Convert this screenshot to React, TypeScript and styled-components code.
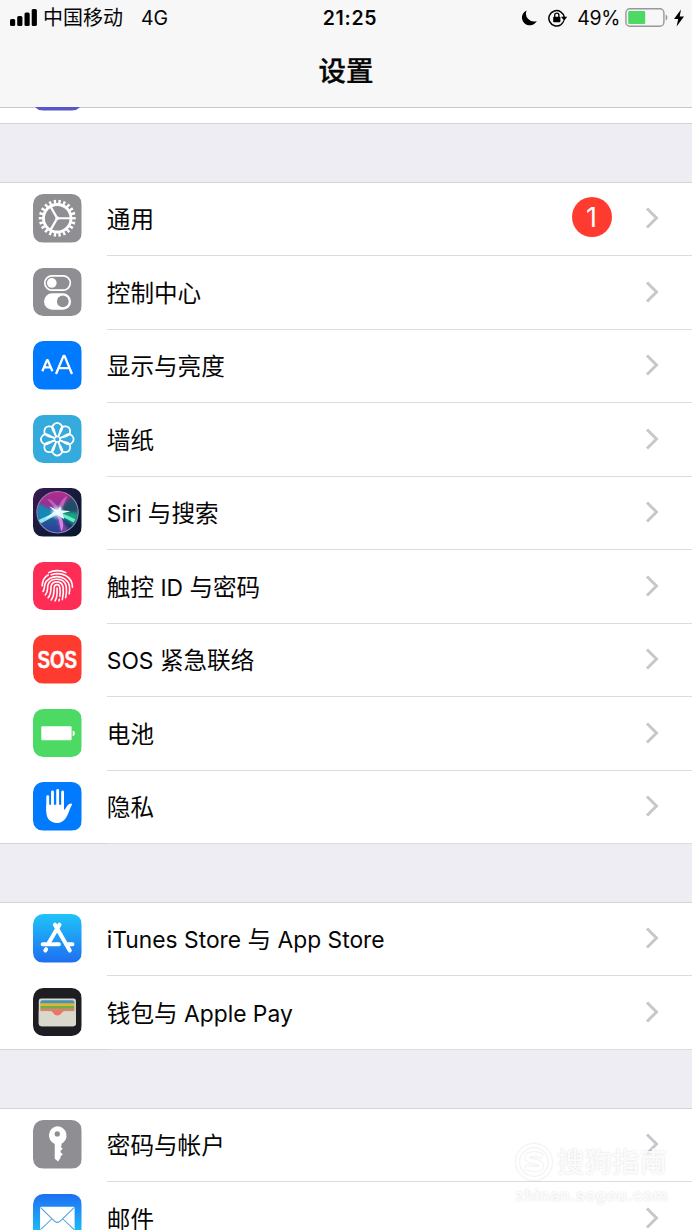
import React from 'react';
import styled, { createGlobalStyle } from 'styled-components';

const GlobalStyle = createGlobalStyle`
  *, *::before, *::after {
    box-sizing: border-box;
  }

  body {
    margin: 0;
    background: #eeedf3;
    color: #060606;
    font-family: Inter, 'Noto Sans CJK SC', sans-serif;
  }
`;

const Screen = styled.div`
  position: relative;
  width: 692px;
  height: 1230px;
  overflow: hidden;
  background: #eeedf3;
`;

const Header = styled.header`
  height: 107px;
  background: #f7f7f7;
`;

const StatusBar = styled.div`
  display: grid;
  grid-template-columns: 1fr auto 1fr;
  align-items: center;
  height: 35px;
  padding: 0 8px 0 10px;
`;

const StatusSide = styled.div<{ $end?: boolean }>`
  display: flex;
  align-items: center;
  justify-content: ${p => (p.$end ? 'flex-end' : 'flex-start')};
`;

const Carrier = styled.span`
  margin-left: 6px;
  padding-top: 1px;
  font-size: 20px;
  line-height: 34px;
`;

const Network = styled.span`
  margin-left: 18px;
  font-size: 19.5px;
  letter-spacing: -0.2px;
`;

const Time = styled.span`
  padding-left: 6px;
  font-size: 19.5px;
  font-weight: 600;
  letter-spacing: 0.7px;
`;

const Percent = styled.span`
  margin: 0 5px 0 9px;
  font-size: 19.5px;
  letter-spacing: -0.4px;
`;

const Title = styled.h1`
  margin: 0;
  font-size: 27.5px;
  font-weight: 500;
  line-height: 72px;
  text-align: center;
  -webkit-text-stroke: 0.3px currentColor;
`;

const Group = styled.section<{ $gap: number }>`
  margin-top: ${p => p.$gap}px;
  background: #fff;
  box-shadow: 0 -1px 0 #d3d3d8;
`;

const Remainder = styled.div`
  display: flex;
  align-items: flex-end;
  height: 17px;
  padding: 0 0 12.5px 33.3px;
  overflow: hidden;
  background: #fff;
  border-bottom: 1px solid #d3d3d8;
  box-shadow: inset 0 1px 0 #c9c9cc;
`;

const Row = styled.div`
  display: flex;
  height: 73.5px;
  padding-left: 33.3px;

  &:last-child {
    box-shadow: inset 0 -1px 0 #d3d3d8;
  }
`;

const IconBox = styled.svg`
  flex: none;
  width: 48.5px;
  height: 48.5px;
  margin: 11.5px 25px 0 0;
  border-radius: 10.5px;
`;

const RowBody = styled.div`
  display: flex;
  flex: 1;
  align-items: center;
  padding: 0 33.5px 1px 0;
  border-bottom: 1px solid #dcdce0;
`;

const Label = styled.span`
  flex: 1;
  padding-top: 4px;
  font-size: 23.6px;
  line-height: 36px;
  white-space: nowrap;
`;

const Latin = styled.span`
  font-size: 22.8px;
`;

const Badge = styled.span`
  width: 40px;
  height: 40px;
  margin: -2px 33px 0 0;
  border-radius: 50%;
  background: #ff3b30;
  color: #fff;
  font-size: 27px;
  line-height: 41px;
  text-align: center;
`;

const Watermark = styled.div`
  position: absolute;
  left: 515px;
  top: 1143px;
  width: 160px;
  color: rgba(255, 255, 255, 0.88);
  text-shadow: 0 0 2px rgba(0, 0, 0, 0.15);
`;

const WatermarkBrand = styled.div`
  display: flex;
  align-items: center;
  gap: 4px;
  font-size: 27.5px;
  font-weight: 500;
  line-height: 38px;

  svg {
    filter: drop-shadow(0 0 1px rgba(0, 0, 0, 0.14));
  }
`;

const WatermarkSite = styled.div`
  font-size: 16px;
  font-weight: 600;
  line-height: 28px;
  letter-spacing: 0.6px;
  white-space: nowrap;
`;

const Chevron = () => (
  <svg width="14" height="22" viewBox="0 0 14 22" fill="none">
    <path d="M2 1.5 11.5 11 2 20.5" stroke="#c7c7cc" strokeWidth="3" />
  </svg>
);

const SignalIcon = () => (
  <svg width="27" height="17" viewBox="0 0 27 17">
    <rect x="0" y="10" width="5.2" height="7" rx="1.5" />
    <rect x="7.2" y="7" width="5.2" height="10" rx="1.5" />
    <rect x="14.5" y="3.5" width="5.2" height="13.5" rx="1.5" />
    <rect x="21.7" y="0" width="5.2" height="17" rx="1.5" />
  </svg>
);

const MoonIcon = () => (
  <svg width="15" height="16" viewBox="0 0 15 16">
    <path d="M4.6.4a8 8 0 0 0 10.2 10.5A7.8 7.8 0 1 1 4.6.4Z" />
  </svg>
);

const RotationLockIcon = () => (
  <svg width="20" height="18" viewBox="0 0 20 18" style={{ marginLeft: 11 }}>
    <path d="M13 15.6A7.7 7.7 0 1 1 16.2 8.2" fill="none" stroke="#000" strokeWidth="1.5" />
    <path d="M13 7.8h6.2l-3 4z" />
    <path d="M15.9 11.4a7.7 7.7 0 0 1-2.9 4.2" fill="none" stroke="#000" strokeWidth="1.3" />
    <rect x="5.2" y="7.8" width="7.2" height="5.4" rx=".7" />
    <path d="M6.7 8.2V6.3a2.1 2.1 0 0 1 4.2 0v1.9" fill="none" stroke="#000" strokeWidth="1.3" />
  </svg>
);

const StatusBattery = () => (
  <svg width="43" height="19" viewBox="0 0 43 19">
    <rect x=".9" y=".7" width="38" height="17.6" rx="4" fill="none" stroke="#98989b" strokeWidth="1.4" />
    <rect x="3.2" y="3" width="17" height="13" rx="1" fill="#4cd964" />
    <path d="M40.7 6.4c2.2.7 2.2 5.5 0 6.2z" fill="#98989b" />
  </svg>
);

const BoltIcon = () => (
  <svg width="10" height="18" viewBox="0 0 10 18" style={{ marginLeft: 6 }}>
    <path d="M7 .5 0 10h4.2L2.6 17.5 10 7.4H5.7z" />
  </svg>
);

const GearIcon = () => (
  <IconBox viewBox="0 0 48 48">
    <rect width="48" height="48" fill="#8e8e93" />
    <g fill="none" stroke="#fff" transform="translate(24 24)">
      <circle r="13.6" strokeWidth="2.8" />
      <circle r="16.2" strokeWidth="4.2" pathLength="44" strokeDasharray="1 1" strokeDashoffset="0.5" />
      <path d="M1.6 0H13M-.8 -1.4-6.5 -11.3M-.8 1.4-6.5 11.3" strokeWidth="2.2" />
      <circle r="1.9" fill="#fff" stroke="none" />
    </g>
  </IconBox>
);

const ControlIcon = () => (
  <IconBox viewBox="0 0 48 48">
    <rect width="48" height="48" fill="#8e8e93" />
    <rect x="11.7" y="7.7" width="25.2" height="14.2" rx="7.1" fill="none" stroke="#fff" strokeWidth="1.7" />
    <circle cx="18.6" cy="14.8" r="4.8" fill="#fff" />
    <rect x="10.9" y="25" width="26.8" height="16.2" rx="8.1" fill="#fff" />
    <circle cx="29.5" cy="33.1" r="5.8" fill="#8e8e93" />
  </IconBox>
);

const DisplayIcon = () => (
  <IconBox viewBox="0 0 48 48">
    <rect width="48" height="48" fill="#007aff" />
    <g fill="none" stroke="#fff" strokeLinejoin="bevel">
      <path d="M9.2 29.9 13.9 18.8h.6L19.2 29.9M11 26h6.6" strokeWidth="2.2" />
      <path d="M22.8 32.6 30.2 14.7h1L38.6 32.6M25.3 26.8h10.8" strokeWidth="2.3" />
    </g>
  </IconBox>
);

const petals = [0, 45, 90, 135, 180, 225, 270, 315];

const WallpaperIcon = () => (
  <IconBox viewBox="0 0 48 48">
    <rect width="48" height="48" fill="#35aadc" />
    <g fill="none" stroke="#fff" strokeWidth="1.7" transform="translate(24 24)">
      {petals.map(a => (
        <g key={a} transform={`rotate(${a})`}>
          <path d="M-4.2 -8.6A4.9 4.9 0 1 1 4.2 -8.6C3.4 -6.8 1.9 -4.8 1.2 -3M-4.2 -8.6C-3.4 -6.8 -1.9 -4.8 -1.2 -3" />
        </g>
      ))}
      <circle r="2.8" strokeWidth="1.5" />
    </g>
  </IconBox>
);

const SiriIcon = () => (
  <IconBox viewBox="0 0 48 48">
    <defs>
      <linearGradient id="siriBack" x2="1" y2="1">
        <stop offset="0" stopColor="#3b1a55" />
        <stop offset=".6" stopColor="#101a38" />
        <stop offset="1" stopColor="#0b1632" />
      </linearGradient>
      <linearGradient id="siriOrb" x2="0" y2="1">
        <stop offset="0" stopColor="#b8288e" />
        <stop offset=".36" stopColor="#8a3594" />
        <stop offset=".58" stopColor="#20669b" />
        <stop offset="1" stopColor="#2b3c98" />
      </linearGradient>
      <radialGradient id="siriGlow">
        <stop offset="0" stopColor="#fff" />
        <stop offset=".35" stopColor="#e6f6ff" stopOpacity=".75" />
        <stop offset="1" stopColor="#7ee8f0" stopOpacity="0" />
      </radialGradient>
      <filter id="siriHaze" x="-50%" y="-50%" width="200%" height="200%">
        <feGaussianBlur stdDeviation="1.8" />
      </filter>
      <filter id="siriSoft" x="-30%" y="-30%" width="160%" height="160%">
        <feGaussianBlur stdDeviation=".5" />
      </filter>
      <clipPath id="siriClip">
        <circle cx="24.3" cy="24" r="20.3" />
      </clipPath>
    </defs>
    <rect width="48" height="48" fill="url(#siriBack)" />
    <circle cx="24.3" cy="24" r="20.5" fill="url(#siriOrb)" />
    <g clipPath="url(#siriClip)">
      <g filter="url(#siriHaze)">
        <path d="M24 24 4 15 5 33Z" fill="#1688b8" />
        <path d="M26 23 38 8 46 17 45 27Z" fill="#244d68" />
        <path d="M26 24 45 25 41 36Z" fill="#18a887" />
        <path d="M29 29 41 36 34 45Z" fill="#173a68" />
        <path d="M22 26 28 44 35 42Z" fill="#8c3fb0" />
      </g>
      <g filter="url(#siriSoft)">
        <path d="M24 23C19 17 16 13 14 11C18 11 22 15 25 20Z" fill="#e174c4" opacity=".65" />
        <path d="M25 22C26 14 30 10 34 8C32 13 30 18 28 22Z" fill="#dc83cf" opacity=".6" />
        <path d="M23 25C26 31 26.5 38 28 43C32 37 29 30 26 25Z" fill="#d983df" />
        <path d="M24 23 5 32 8 35 25 26Z" fill="#8de5f2" />
        <path d="M24 23 42 31 40 34 26 27Z" fill="#67f0c5" />
        <path d="M16 18 24 22 27 18 28 22 37 23 29 25 31 31 23 26 12 31 21 23Z" fill="#fff" />
      </g>
      <circle cx="24" cy="24" r="8" fill="url(#siriGlow)" />
    </g>
    <circle cx="24.3" cy="24" r="20.5" fill="none" stroke="#a9a0bc" strokeWidth="1" opacity=".8" />
  </IconBox>
);

const TouchIdIcon = () => (
  <IconBox viewBox="0 0 48 48">
    <rect width="48" height="48" fill="#ff2d55" />
    <g fill="none" stroke="#fff" strokeWidth="1.6" strokeLinecap="round">
      <path d="M15.5 10.5c5-2.6 12-2.6 17 0" />
      <path d="M9 23.5C9.4 18.5 11.6 14.5 15 12.8" />
      <path d="M18 12.6C28 9.3 38.8 14 39.1 25" />
      <path d="M9.9 29.2C11.6 27.2 11 24.6 11.7 22.2 14.8 11.6 33.6 11.6 36.1 23.8c.4 2.6.2 5.1-.3 7.6" />
      <path d="M12.2 32.6C15.4 29.4 14 26 14.8 22.8 17.1 14.8 31 15 32.9 24c.5 3.7.3 7.4-.6 11.2" />
      <path d="M14.9 35.4C18.6 31.4 17.2 27.2 18 23.6 19.5 18.1 28.3 18.4 29.7 24.4c.6 4.3.3 8.6-.7 12.8" />
      <path d="M18 37.6C21.8 32.6 20.4 28.2 21.1 24.6c.7-3 4.7-2.9 5.4.2.5 3.3.5 6.2.1 9M26 37l-.3 1.4" />
      <path d="M21.9 38.4C24.4 33.6 23.9 29.6 23.8 25.8" />
    </g>
  </IconBox>
);

const SosIcon = () => (
  <IconBox viewBox="0 0 48 48">
    <rect width="48" height="48" fill="#ff3b30" />
    <text
      transform="translate(24 32.2) scale(.76 1)"
      textAnchor="middle"
      fill="#fff"
      stroke="#fff"
      strokeWidth=".4"
      fontFamily="'Liberation Sans', sans-serif"
      fontSize="24.5"
      fontWeight="700"
    >
      SOS
    </text>
  </IconBox>
);

const BatteryIcon = () => (
  <IconBox viewBox="0 0 48 48">
    <rect width="48" height="48" fill="#4cd964" />
    <rect x="8.2" y="17" width="30" height="14" rx="1" fill="#fff" />
    <path d="M39.3 21.3c2.8.6 2.8 5.1 0 5.7z" fill="#fff" />
  </IconBox>
);

const PrivacyIcon = () => (
  <IconBox viewBox="0 0 48 48">
    <rect width="48" height="48" fill="#007aff" />
    <path
      d="M14.6 14.4v14M19.3 9.7V27M24.4 8.3v19M29.3 9.9v17"
      stroke="#fff"
      strokeWidth="2.8"
      strokeLinecap="round"
    />
    <path
      d="M13.2 22.5H30.7v5.3c1.8-1 2.6-4.6 5-6 1.6-1 3.6-.6 2.8.9-2.5 3.5-3 8.6-5.8 12.6-2.2 3.2-4.8 5.2-9 5.2-6.8 0-10.5-4.4-10.5-11z"
      fill="#fff"
    />
  </IconBox>
);

const AppStoreIcon = () => (
  <IconBox viewBox="0 0 48 48">
    <defs>
      <linearGradient id="store" x2="0" y2="1">
        <stop offset="0" stopColor="#1fc4f9" />
        <stop offset="1" stopColor="#1e6ff1" />
      </linearGradient>
    </defs>
    <rect width="48" height="48" fill="url(#store)" />
    <g stroke="#fff" strokeWidth="4" strokeLinecap="round">
      <path d="M26.2 10.6 15.5 28.8M21.7 10.6 36.4 36.2M9.6 29.9H25.6M32.6 29.9H39M13 34.8 12.2 36.2" />
    </g>
  </IconBox>
);

const WalletIcon = () => (
  <IconBox viewBox="0 0 48 48">
    <rect width="48" height="48" fill="#1e1d21" />
    <rect x="5.7" y="10.4" width="36.8" height="27.4" rx="2.4" fill="#dad7cd" />
    <path d="M7.3 14q0-2 2-2h29.6q2 0 2 2v2H7.3z" fill="#4694b5" />
    <path d="M7.3 15.2h33.6v3H7.3z" fill="#e5b334" />
    <path d="M7.3 17.8h33.6v3H7.3z" fill="#6fae45" />
    <path d="M7.3 20.3h33.6v3H7.3z" fill="#d58470" />
    <path d="M5.7 23h11.4c2.2 0 2.3 1 3.3 2.3 1.8 2.3 5.8 2.3 7.6 0 1-1.3 1.2-2.3 3.3-2.3h11.2v12q0 2.8-2.8 2.8H8.5q-2.8 0-2.8-2.8z" fill="#dad7cd" />
    <path d="M17.2 22.4c2.2.4 2.3 1.6 3.2 2.9 1.8 2.6 5.8 2.6 7.6 0 1-1.3 1.2-2.5 3.2-2.9z" fill="#f07367" />
  </IconBox>
);

const KeyIcon = () => (
  <IconBox viewBox="0 0 48 48">
    <rect width="48" height="48" fill="#8e8e93" />
    <path
      fillRule="evenodd"
      fill="#fff"
      d="M24 6.3a9.1 9.1 0 0 1 4.2 17.2v2.2l-.8.8 2 2-2.2 2.3v1.2l2.3 2-2.3 2.1v1.6L24.8 41l-3.3-2.6V23.8A9.1 9.1 0 0 1 24 6.3m0 4.9a2.6 2.6 0 1 0 0 5.2 2.6 2.6 0 0 0 0-5.2"
    />
  </IconBox>
);

const MailIcon = () => (
  <IconBox viewBox="0 0 48 48">
    <defs>
      <linearGradient id="mail" x2="0" y2="1">
        <stop offset="0" stopColor="#1e6ff1" />
        <stop offset="1" stopColor="#1bd2fc" />
      </linearGradient>
    </defs>
    <rect width="48" height="48" fill="url(#mail)" />
    <rect x="7" y="12.7" width="34.2" height="23" rx="1.4" fill="#fff" />
    <path d="M7.5 13.4 21 26.6q3.1 3 6.2 0L40.7 13.4M7.5 35.2 18.8 24.5M40.7 35.2 29.4 24.5" fill="none" stroke="#4a9fd8" strokeWidth="1" />
  </IconBox>
);

const HiddenAppIcon = () => (
  <IconBox viewBox="0 0 48 48" style={{ margin: 0 }}>
    <rect width="48" height="48" fill="#5856c8" />
  </IconBox>
);

interface SettingRowProps {
  icon: React.ReactNode;
  badge?: number;
  children: React.ReactNode;
}
const SettingRow: React.FC<SettingRowProps> = ({ icon, badge, children }) => (
  <Row>
    {icon}
    <RowBody>
      <Label>{children}</Label>
      {badge && <Badge>{badge}</Badge>}
      <Chevron />
    </RowBody>
  </Row>
);

const App: React.FC = () => (
  <>
    <GlobalStyle />
    <Screen lang="zh-CN">
      <Header>
        <StatusBar>
          <StatusSide>
            <SignalIcon />
            <Carrier>中国移动</Carrier>
            <Network>4G</Network>
          </StatusSide>
          <Time>21:25</Time>
          <StatusSide $end>
            <MoonIcon />
            <RotationLockIcon />
            <Percent>49%</Percent>
            <StatusBattery />
            <BoltIcon />
          </StatusSide>
        </StatusBar>
        <Title>设置</Title>
      </Header>
      <Remainder>
        <HiddenAppIcon />
      </Remainder>
      <Group $gap={58.5}>
        <SettingRow icon={<GearIcon />} badge={1}>通用</SettingRow>
        <SettingRow icon={<ControlIcon />}>控制中心</SettingRow>
        <SettingRow icon={<DisplayIcon />}>显示与亮度</SettingRow>
        <SettingRow icon={<WallpaperIcon />}>墙纸</SettingRow>
        <SettingRow icon={<SiriIcon />}><Latin>Siri </Latin>与搜索</SettingRow>
        <SettingRow icon={<TouchIdIcon />}>触控<Latin> ID </Latin>与密码</SettingRow>
        <SettingRow icon={<SosIcon />}><Latin>SOS </Latin>紧急联络</SettingRow>
        <SettingRow icon={<BatteryIcon />}>电池</SettingRow>
        <SettingRow icon={<PrivacyIcon />}>隐私</SettingRow>
      </Group>
      <Group $gap={58.5}>
        <SettingRow icon={<AppStoreIcon />}>
          <Latin>iTunes Store </Latin>与<Latin> App Store</Latin>
        </SettingRow>
        <SettingRow icon={<WalletIcon />}>钱包与<Latin> Apple Pay</Latin></SettingRow>
      </Group>
      <Group $gap={59}>
        <SettingRow icon={<KeyIcon />}>密码与帐户</SettingRow>
        <SettingRow icon={<MailIcon />}>邮件</SettingRow>
      </Group>
      <Watermark>
        <WatermarkBrand>
          <svg width="38" height="38" viewBox="0 0 38 38" fill="none" stroke="#fff">
            <circle cx="19" cy="19" r="16.5" strokeWidth="3" />
            <path d="M26.5 13.2c-4-3.2-14-2.7-14 1.3 0 5 13.5 3 13.5 8 0 4-10.5 4.7-15 1.2" strokeWidth="4" />
          </svg>
          搜狗指南
        </WatermarkBrand>
        <WatermarkSite>zhinan.sogou.com</WatermarkSite>
      </Watermark>
    </Screen>
  </>
);

export default App;
